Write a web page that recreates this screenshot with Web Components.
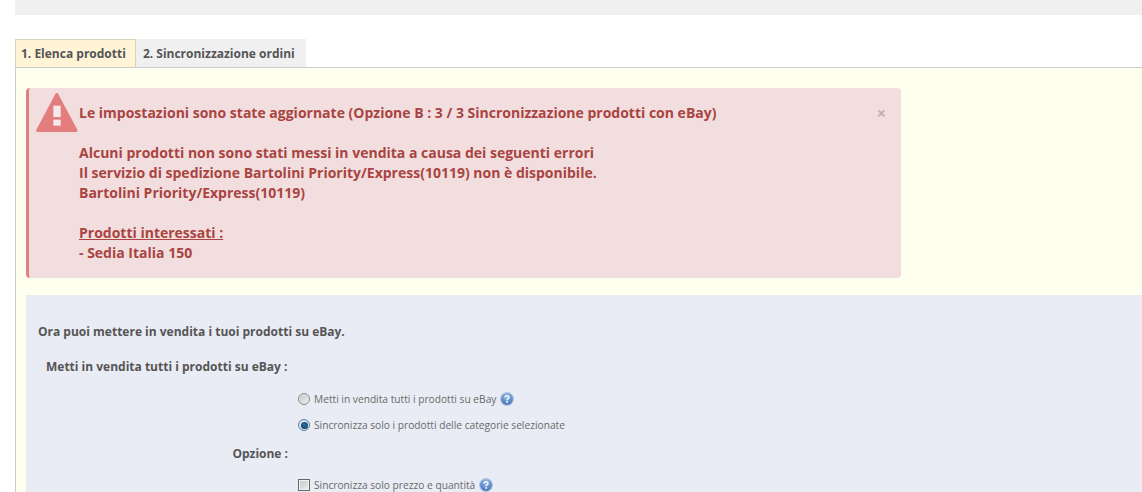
<!DOCTYPE html>
<html>
<head>
<meta charset="utf-8">
<title>eBay</title>
<style>
  html, body { margin: 0; height: 492px; overflow: hidden; background: #fff; }
  body { font-family: "Open Sans", sans-serif; color: #555; }
</style>
</head>
<body>
<template id="help-tpl">
  <style>
    :host { display: inline-flex; width: 14px; height: 14px; }
    svg { display: block; }
  </style>
  <svg width="14" height="14" viewBox="0 0 14 14">
    <defs><radialGradient id="g" cx="50%" cy="30%" r="70%"><stop offset="0" stop-color="#9dbde8"/><stop offset=".6" stop-color="#5f8dcb"/><stop offset="1" stop-color="#3a6cb0"/></radialGradient></defs>
    <circle cx="7" cy="7" r="6.4" fill="url(#g)" stroke="#b4c6e0" stroke-width="1.1"/>
    <path d="M5 5.5C5 3.3 9 3.3 9 5.3C9 6.7 7.1 6.7 7.1 8.2" fill="none" stroke="#f2f6fc" stroke-width="1.5"/>
    <rect x="6.3" y="9.1" width="1.7" height="1.7" fill="#f2f6fc"/>
  </svg>
</template>

<script>
const helpTpl = document.getElementById('help-tpl')

customElements.define('help-icon', class HelpIcon extends HTMLElement {
    constructor() {
        super();
        this.attachShadow({mode: 'open'}).appendChild(helpTpl.content.cloneNode(true));
    }
});

customElements.define('tab-item', class TabItem extends HTMLElement {
    constructor() {
        super();
        this.attachShadow({mode: 'open'}).innerHTML = `
        <style>
            :host {
                display: flex; align-items: center; box-sizing: border-box; height: 29px;
                padding: 0 11px 0 7px; margin-bottom: -1px; background: #f0f0f0; border-bottom: 1px solid #ccc;
                font: 700 12px "Open Sans", sans-serif; color: #555; white-space: nowrap;
            }
            :host([active]) { background: #fff4d5; border: 1px solid #d8d2b8; border-bottom-color: #ccc; padding: 0 9px 0 5px; }
        </style>
        <slot></slot>`;
    }
});

customElements.define('tab-bar', class TabBar extends HTMLElement {
    constructor() {
        super();
        this.attachShadow({mode: 'open'}).innerHTML = `
        <style>:host { display: flex; }</style>
        <slot></slot>`;
    }
});

customElements.define('error-alert', class ErrorAlert extends HTMLElement {
    constructor() {
        super();
        this.attachShadow({mode: 'open'}).innerHTML = `
        <style>
            :host {
                display: block; position: relative; box-sizing: border-box; width: 875px; height: 190px;
                padding: 15px 0 0 50px; background: #f2dede; border-left: 3px solid #e08080; border-radius: 4px;
                font: 700 14px/20px "Open Sans", sans-serif; color: #a94442;
            }
            svg { position: absolute; left: 7px; top: 4px; }
            .close { position: absolute; right: 15px; top: 15px; font: 700 16px/20px "Open Sans", sans-serif; color: #c4b0b0; }
        </style>
        <svg width="42" height="41" viewBox="0 0 42 41">
            <path d="M20.8 2.5L40 38.5H1.7Z" fill="#e47d7d" stroke="#e47d7d" stroke-width="3" stroke-linejoin="round"/>
            <rect x="17.3" y="13.7" width="7.4" height="11.3" fill="#f7e9e9"/>
            <rect x="17.3" y="27.7" width="7.4" height="6" fill="#f7e9e9"/>
        </svg>
        <span class="close">×</span>
        <slot></slot>`;
    }
});

customElements.define('form-panel', class FormPanel extends HTMLElement {
    constructor() {
        super();
        this.attachShadow({mode: 'open'}).innerHTML = `
        <style>
            :host {
                display: block; box-sizing: border-box; margin-top: 17px; height: 197px; padding: 28px 0 0 12px; overflow: hidden;
                background: #e9ecf4; font: 700 12px/18px "Open Sans", sans-serif; color: #555;
            }
        </style>
        <slot></slot>`;
    }
});

customElements.define('form-label', class FormLabel extends HTMLElement {
    constructor() {
        super();
        this.attachShadow({mode: 'open'}).innerHTML = `
        <style>
            :host { display: block; font: 700 12px/18px "Open Sans", sans-serif; color: #555; }
            :host([end]) { width: 250px; text-align: right; }
            :host([start]) { padding-left: 8px; }
        </style>
        <slot></slot>`;
    }
});

customElements.define('form-option', class FormOption extends HTMLElement {
    constructor() {
        super();
        this.attachShadow({mode: 'open'}).innerHTML = `
        <style>
            :host {
                display: flex; align-items: center; gap: 4px; padding-left: 260px; height: 16px;
                font: 400 10.2px/16px "Open Sans", sans-serif; color: #6a6a6a;
            }
            .mark {
                flex: none; width: 12px; height: 12px; box-sizing: border-box; position: relative;
                border: 1px solid #8c8c8c; border-radius: 50%;
                background: linear-gradient(135deg, #c4c4c4, #f2f2f2); box-shadow: inset 0 0 0 1px #e4e4e4;
            }
            :host([type=check]) .mark { border-radius: 0; border-color: #666; background: linear-gradient(135deg, #c8c8c8, #ececec); box-shadow: inset 0 0 0 1px #f4f4f4; }
            :host([checked]) .mark { border-color: #5f7f9f; background: #d5e3ef; box-shadow: none; }
            :host([checked]) .mark::after {
                content: ""; position: absolute; inset: 1.5px; border-radius: 50%;
                background: radial-gradient(circle at 50% 40%, #2f6f9f, #0b3557);
            }
            ::slotted(help-icon) { margin-left: 0; }
        </style>
        <span class="mark"></span>
        <slot></slot>`;
    }
});

customElements.define('listing-page', class ListingPage extends HTMLElement {
    constructor() {
        super();
        this.attachShadow({mode: 'open'}).innerHTML = `
        <style>
            :host { display: block; padding-left: 15px; }
            .top { height: 15px; background: #f0f0f0; margin-bottom: 24px; }
            .body { background: #ffffef; border-left: 1px solid #ccc; border-top: 1px solid #ccc; padding: 20px 0 0 10px; height: 404px; }
        </style>
        <div class="top"></div>
        <slot name="tabs"></slot>
        <div class="body"><slot></slot></div>`;
    }
});
</script>

<listing-page>
  <tab-bar slot="tabs">
    <tab-item active>1. Elenca prodotti</tab-item>
    <tab-item>2. Sincronizzazione ordini</tab-item>
  </tab-bar>
  <error-alert>
    Le impostazioni sono state aggiornate (Opzione B : 3 / 3 Sincronizzazione prodotti con eBay)<br><br>
    Alcuni prodotti non sono stati messi in vendita a causa dei seguenti errori<br>
    Il servizio di spedizione Bartolini Priority/Express(10119) non è disponibile.<br>
    Bartolini Priority/Express(10119)<br><br>
    <u>Prodotti interessati :</u><br>
    - Sedia Italia 150
  </error-alert>
  <form-panel>
    Ora puoi mettere in vendita i tuoi prodotti su eBay.
    <form-label start style="margin-top:17px">Metti in vendita tutti i prodotti su eBay :</form-label>
    <form-option style="margin-top:15px">Metti in vendita tutti i prodotti su eBay <help-icon></help-icon></form-option>
    <form-option checked style="margin-top:10px">Sincronizza solo i prodotti delle categorie selezionate</form-option>
    <form-label end style="margin-top:12px">Opzione :</form-label>
    <form-option type="check" style="margin-top:14px">Sincronizza solo prezzo e quantità <help-icon></help-icon></form-option>
  </form-panel>
</listing-page>
</body>
</html>
